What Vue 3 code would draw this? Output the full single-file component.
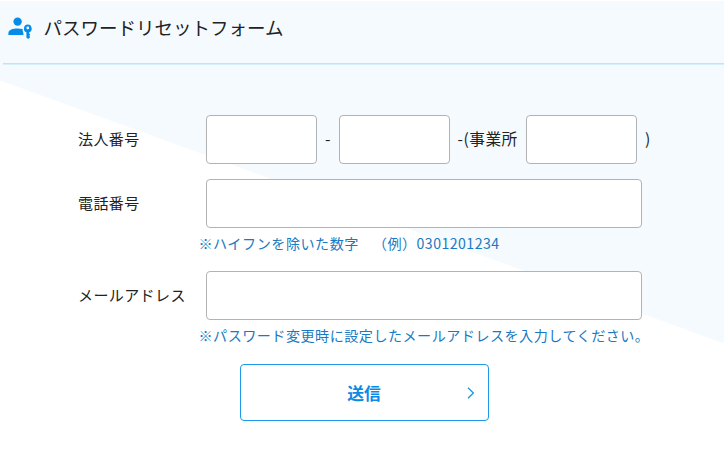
<script setup>
import { reactive } from 'vue'

const form = reactive({ corp1: '', corp2: '', office: '', phone: '', mail: '' })
</script>

<template>
  <main class="page">
    <header class="head">
      <svg class="head-icon" viewBox="0 0 26 24" aria-hidden="true">
        <circle cx="9.6" cy="5.6" r="4.2" />
        <path d="M0.4 18.9V17.2C0.4 13.8 5 12.4 9.6 12.4C11.4 12.4 13 12.6 14.6 13.1C14.6 14.8 15 16 15.4 16.9V18.9Z" />
        <path
          fill-rule="evenodd"
          d="M19.8 8.6A4 4 0 0 0 18.4 16.3V21.4L20.2 23L22.3 21.1L21.2 19.9L22.3 18.6L21.2 17.4V16.3A4 4 0 0 0 19.8 8.6ZM19.8 10.5A1.4 1.4 0 1 1 19.8 13.3A1.4 1.4 0 1 1 19.8 10.5Z"
        />
      </svg>
      <h1 class="title">パスワードリセットフォーム</h1>
    </header>

    <form class="form" @submit.prevent>
      <div class="row">
        <label class="label" for="corp1">法人番号</label>
        <input id="corp1" v-model="form.corp1" class="field short" type="text" />
        <span class="sep dash">-</span>
        <input v-model="form.corp2" class="field short" type="text" />
        <span class="sep office">-(事業所</span>
        <input v-model="form.office" class="field short" type="text" />
        <span class="sep close">)</span>
      </div>
      <div class="row phone">
        <label class="label" for="phone">電話番号</label>
        <input id="phone" v-model="form.phone" class="field" type="text" />
      </div>
      <p class="note">※ハイフンを除いた数字　<span class="example">（例）0301201234</span></p>
      <div class="row mail">
        <label class="label" for="mail">メールアドレス</label>
        <input id="mail" v-model="form.mail" class="field" type="text" />
      </div>
      <p class="note">※パスワード変更時に設定したメールアドレスを入力してください。</p>
      <button class="submit" type="submit">
        <span class="submit-text">送信</span>
        <svg class="chevron" viewBox="0 0 8 12" aria-hidden="true"><path d="M1 0.8L6.4 6L1 11.2" /></svg>
      </button>
    </form>
  </main>
</template>

<style>
body {
  background: #fff;
}
</style>

<style scoped>
.page {
  box-sizing: border-box;
  width: 724px;
  height: 453px;
  padding-top: 1px;
  overflow: hidden;
  background: #fff;
  background-image: linear-gradient(to bottom left, #f4fafe 50%, #fff 50.15%);
  background-size: 724px 263px;
  background-position: 0 80px;
  background-repeat: no-repeat;
  color: #222;
  font-family: "Noto Sans CJK JP", sans-serif;
}
.head {
  box-sizing: border-box;
  display: flex;
  height: 79px;
  background: #f4fafe;
  padding: 0 0 0 8px;
  background-image: linear-gradient(#bfe3f8, #bfe3f8);
  background-size: 721px 1.5px;
  background-position: 3px 62px;
  background-repeat: no-repeat;
}
.head-icon {
  flex: none;
  width: 26px;
  height: 24px;
  margin-top: 15px;
  fill: #058ce8;
}
.title {
  margin: 13px 0 0 9.5px;
  font-size: 18.5px;
  line-height: 27px;
  font-weight: 400;
  white-space: nowrap;
}
.form {
  padding: 35px 0 0 78px;
}
.row {
  display: flex;
  align-items: center;
  height: 49px;
}
.phone {
  margin-top: 15px;
}
.mail {
  margin-top: 16px;
}
.label {
  flex: none;
  width: 128px;
  padding-bottom: 1px;
  font-size: 15px;
  letter-spacing: 0.4px;
  line-height: 24px;
}
.field {
  box-sizing: border-box;
  flex: none;
  width: 436px;
  height: 49px;
  margin: 0;
  padding: 0 10px;
  border: 1px solid #b3b3b3;
  border-radius: 4px;
  background: #fff;
  outline: none;
  font: inherit;
}
.short {
  width: 111px;
}
.sep {
  flex: none;
  padding-bottom: 1px;
  font-size: 15.7px;
  letter-spacing: 0.5px;
  line-height: 24px;
  white-space: nowrap;
}
.dash {
  width: 22px;
  text-align: center;
}
.office {
  box-sizing: border-box;
  width: 76px;
  padding-left: 7.5px;
}
.close {
  padding-left: 8px;
}
.note {
  margin: 3px 0 0 120.5px;
  color: #1979c2;
  font-size: 14.1px;
  letter-spacing: 0.48px;
  line-height: 24px;
  white-space: nowrap;
}
.example {
  margin-left: 6.5px;
}
.submit {
  box-sizing: border-box;
  display: grid;
  grid-template-columns: 1fr auto 1fr;
  align-items: center;
  width: 249px;
  height: 57px;
  margin: 17px 0 0 161.5px;
  padding: 0 13px;
  border: 1px solid #1a9ae8;
  border-radius: 4px;
  background: #fff;
  color: #0a8ae4;
  font-family: inherit;
}
.submit-text {
  grid-column: 2;
  font-size: 16.8px;
  line-height: 24px;
  font-weight: 700;
}
.chevron {
  justify-self: end;
  width: 8px;
  height: 12px;
  fill: none;
  stroke: #1a96e8;
  stroke-width: 1.3;
}
</style>
